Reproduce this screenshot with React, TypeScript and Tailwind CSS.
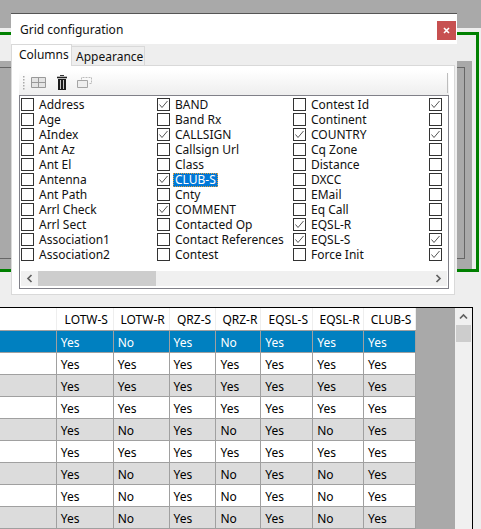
const FONT = "font-['Noto_Sans','Open_Sans',sans-serif]";

const COLS: [string, boolean][][] = [
  [["Address", false], ["Age", false], ["AIndex", false], ["Ant Az", false], ["Ant El", false], ["Antenna", false], ["Ant Path", false], ["Arrl Check", false], ["Arrl Sect", false], ["Association1", false], ["Association2", false]],
  [["BAND", true], ["Band Rx", false], ["CALLSIGN", true], ["Callsign Url", false], ["Class", false], ["CLUB-S", true], ["Cnty", false], ["COMMENT", true], ["Contacted Op", false], ["Contact References", false], ["Contest", false]],
  [["Contest Id", false], ["Continent", false], ["COUNTRY", true], ["Cq Zone", false], ["Distance", false], ["DXCC", false], ["EMail", false], ["Eq Call", false], ["EQSL-R", true], ["EQSL-S", true], ["Force Init", false]],
  [["", true], ["", false], ["", true], ["", false], ["", false], ["", false], ["", false], ["", false], ["", false], ["", true], ["", true]],
];

const WIDTHS = ["w-[57px]", "w-[57px]", "w-[56px]", "w-[47px]", "w-[45px]", "w-[52px]", "w-[51px]", "w-[52px]"];
const HEADERS = ["", "LOTW-S", "LOTW-R", "QRZ-S", "QRZ-R", "EQSL-S", "EQSL-R", "CLUB-S"];
const ALL = ["", "Yes", "Yes", "Yes", "Yes", "Yes", "Yes", "Yes"];
const ALT = ["", "Yes", "No", "Yes", "No", "Yes", "No", "Yes"];
const ROWS = [
  { cells: ["", "Yes", "No", "Yes", "No", "Yes", "Yes", "Yes"], bg: "bg-[#0080c0] text-white" },
  { cells: ALL, bg: "bg-white text-black" },
  { cells: ALL, bg: "bg-[#dcdcdc] text-black" },
  { cells: ALL, bg: "bg-white text-black" },
  { cells: ALT, bg: "bg-[#dcdcdc] text-black" },
  { cells: ALL, bg: "bg-white text-black" },
  { cells: ALT, bg: "bg-[#dcdcdc] text-black" },
  { cells: ALT, bg: "bg-white text-black" },
  { cells: ALT, bg: "bg-[#dcdcdc] text-black" },
];

function Check({ on }: { on: boolean }) {
  return (
    <svg width="13" height="13" viewBox="0 0 13 13" className="shrink-0">
      <rect x="0.5" y="0.5" width="12" height="12" fill="#fff" stroke="#333" />
      {on && <path d="M2.5 6.5 L5 9.5 L10.5 3" fill="none" stroke="#555" strokeWidth="1" />}
    </svg>
  );
}

function ListItem({ label, on }: { label: string; on: boolean }) {
  const selected = label === "CLUB-S";
  return (
    <div className="flex h-[15px] items-center">
      <Check on={on} />
      {selected ? (
        <span className="ml-[3px] h-[14px] bg-[#0078d7] px-[2px] leading-[14px] text-white outline-1 -outline-offset-1 outline-dotted outline-[#e0a040]">
          {label}
        </span>
      ) : (
        <span className="ml-[5px] whitespace-nowrap leading-[15px] text-[#111]">{label}</span>
      )}
    </div>
  );
}

function Dialog() {
  return (
    <div className={`absolute left-[11px] top-[13px] flex h-[282px] w-[446px] flex-col border-t border-[#555] bg-[#eeeeee] text-[12px] ${FONT}`}>
      <div className="flex h-[30px] shrink-0 items-start justify-between bg-white pl-[9px] pr-px">
        <span className="mt-[7px] leading-[17px] text-[#111]">Grid configuration</span>
        <button className="mt-[7px] flex h-[19px] w-[19px] items-center justify-center bg-[#c75050]">
          <svg width="7" height="7" viewBox="0 0 7 7">
            <path d="M1 1 L6 6 M6 1 L1 6" stroke="#fff" strokeWidth="1.6" />
          </svg>
        </button>
      </div>
      <div className="flex h-[21px] shrink-0 items-end">
        <div className="relative z-10 -mb-px h-[22px] w-[61px] border-x border-t border-[#d9d9d9] bg-white pl-[7px] leading-[19px] text-[#111]">Columns</div>
        <div className="h-[19px] w-[73px] border-r border-t border-[#d9d9d9] bg-[#eeeeee] pl-[4px] leading-[20px] text-[#111]">Appearance</div>
      </div>
      <div className="flex h-[230px] w-[444px] flex-col border border-[#d9d9d9] bg-white pl-[7px] pt-[4px]">
        <div className="flex h-[25px] w-[430px] shrink-0 items-center bg-gradient-to-b from-white to-[#eeeeee]">
          <svg width="3" height="16" viewBox="0 0 3 16" className="ml-[3px]">
            {[0, 3, 6, 9, 12].map((y) => (
              <rect key={y} x="1" y={y + 1} width="1.5" height="1.5" fill="#aaa" />
            ))}
          </svg>
          <svg width="15" height="11" viewBox="0 0 15 11" className="ml-[6px]">
            <path d="M0.5 0.5H14.5V10.5H0.5Z M0.5 5.5H14.5 M7.5 0.5V10.5" fill="#e4e4e4" stroke="#999" />
          </svg>
          <svg width="10" height="15" viewBox="0 0 10 15" className="ml-[11px]">
            <path d="M3 0.5H7" stroke="#333" strokeWidth="1" />
            <path d="M0 2.5H10" stroke="#222" strokeWidth="1.6" />
            <path d="M1 4H9V15H1Z" fill="#1c1c1c" />
            <path d="M3.5 5V14 M6.5 5V14" stroke="#c8c8c8" strokeWidth="1" />
          </svg>
          <svg width="15" height="11" viewBox="0 0 15 11" className="ml-[10px]">
            <path d="M4.5 2.5V0.5H14.5V6.5H12" fill="none" stroke="#bbb" strokeDasharray="2 1" />
            <path d="M0.5 3.5H10.5V10.5H0.5Z" fill="#eee" stroke="#a5a5a5" />
          </svg>
          <div className="ml-auto mr-px h-[20px] w-px bg-[#bdbdbd]" />
        </div>
        <div className="flex h-[194px] w-[430px] shrink-0 flex-col overflow-hidden border border-[#808088] bg-white">
          <div className="flex h-[175px] shrink-0 pl-px pt-px">
            {COLS.map((col, i) => (
              <div key={i} className="w-[136px] shrink-0">
                {col.map(([label, on], j) => (
                  <ListItem key={j} label={label} on={on} />
                ))}
              </div>
            ))}
          </div>
          <div className="mx-px flex h-[15px] shrink-0 items-center bg-[#f0f0f0]">
            <div className="flex w-[17px] shrink-0 justify-center">
              <svg width="7" height="9" viewBox="0 0 7 9">
                <path d="M5.5 1 L2 4.5 L5.5 8" fill="none" stroke="#606060" strokeWidth="1.7" />
              </svg>
            </div>
            <div className="h-[15px] w-[118px] bg-[#cdcdcd]" />
            <div className="ml-auto flex w-[17px] shrink-0 justify-center">
              <svg width="7" height="9" viewBox="0 0 7 9">
                <path d="M1.5 1 L5 4.5 L1.5 8" fill="none" stroke="#606060" strokeWidth="1.7" />
              </svg>
            </div>
          </div>
        </div>
      </div>
    </div>
  );
}

function Table() {
  return (
    <div className={`flex h-[222px] w-[473px] border-r border-t border-black text-[12px] ${FONT}`}>
      <div className="w-[455px] overflow-hidden bg-[#a9a9a9]">
        <div className="flex h-[23px] w-[416px] border-b border-[#a0a0a0] bg-white text-black">
          {HEADERS.map((h, i) => (
            <div key={i} className={`${WIDTHS[i]} border-r border-[#eeeeee] pl-[3px] pt-px text-center leading-[21px]`}>{h}</div>
          ))}
        </div>
        {ROWS.map((row, i) => (
          <div key={i} className={`flex h-[22px] w-[416px] border-b border-[#a0a0a0] ${row.bg}`}>
            {row.cells.map((c, j) => (
              <div key={j} className={`${WIDTHS[j]} border-r border-[#a0a0a0] pl-[4px] pt-[2px] leading-[19px]`}>{c}</div>
            ))}
          </div>
        ))}
      </div>
      <div className="flex w-[17px] flex-col bg-[#f0f0f0]">
        <div className="flex h-[17px] items-center justify-center">
          <svg width="9" height="7" viewBox="0 0 9 7">
            <path d="M1 5.5 L4.5 2 L8 5.5" fill="none" stroke="#606060" strokeWidth="1.7" />
          </svg>
        </div>
        <div className="mx-px h-[17px] bg-[#cdcdcd]" />
      </div>
    </div>
  );
}

export default function App() {
  return (
    <div className="relative h-[529px] w-[481px] overflow-hidden bg-[#eeeeee]">
      <div className="h-[28px] bg-[#a9a9a9]" />
      <div className="pt-[4px]">
        <div className="h-[240px] w-[479px] border-y-[3px] border-r-[3px] border-[#008000] pt-[26px]">
          <div className="mr-[4px] h-[208px] bg-[#a9a9a9] pt-[6px]">
            <div className="mr-[7px] h-[192px] border-y border-r border-[#666]" />
          </div>
        </div>
      </div>
      <div className="mt-[35px]">
        <Table />
      </div>
      <Dialog />
    </div>
  );
}
